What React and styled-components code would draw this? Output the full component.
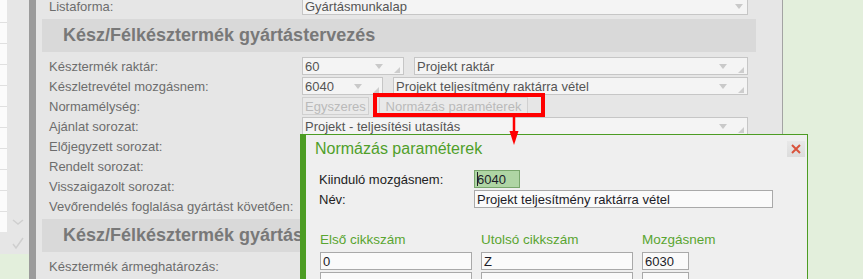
import styled, { createGlobalStyle } from "styled-components";

const GlobalStyle = createGlobalStyle`
  html, body { margin: 0; padding: 0; }
  body {
    width: 863px;
    height: 279px;
    overflow: hidden;
    background: #e6e6e6;
    font-family: "Liberation Sans", Arial, sans-serif;
  }
`;

const Screen = styled.div`
  position: relative;
  display: grid;
  grid-template-columns: 29px 7px 746px 81px;
  height: 279px;
  overflow: hidden;
`;

/* left strip: cut-off list + row tools */
const LeftStrip = styled.div`
  display: grid;
  grid-template-columns: 7px 22px;
  grid-template-rows: 254px 1fr;
  background: #e6e6e6;
`;

const ListColumn = styled.div`
  align-self: start;
  height: 232px;
  padding-top: 2px;
  box-sizing: border-box;
  overflow: hidden;
  background: #fbfbfb;
`;

const ListRow = styled.div`
  height: 20px;
  border-bottom: 1px solid #e0e0e0;
`;

const ToolColumn = styled.div`
  display: flex;
  flex-direction: column;
  align-items: center;
  justify-content: flex-end;
  gap: 7px;
  padding-bottom: 4px;
`;

const GreenFill = styled.div`
  grid-column: 1 / -1;
  background: #e3efdc;
`;

const Divider = styled.div`
  background: #9b9b9b;
`;

const SidePane = styled.div`
  background: #e3efdc;
  border-left: 1px solid #a3a3a3;
`;

/* main form */
const Panel = styled.div`
  background: #e6e6e6;
  padding: 0 26px 0 6px;
`;

const PanelContent = styled.div`
  margin-top: -4px;
  display: flex;
  flex-direction: column;
`;

const SectionHeader = styled.div`
  height: 33px;
  margin: 3px 0 4px;
  padding-left: 21px;
  display: flex;
  align-items: center;
  background: #d9d9d9;
  color: #787878;
  font-size: 18px;
  font-weight: bold;
  white-space: nowrap;
  overflow: hidden;
`;

const FormRow = styled.div`
  display: grid;
  grid-template-columns: 253px 1fr;
  align-items: center;
  height: 20px;
  padding: 0 8px 0 7px;
`;

const Label = styled.span`
  font-size: 13px;
  color: #6d6d6d;
  white-space: nowrap;
`;

const Fields = styled.div`
  display: flex;
  gap: 10px;
  min-width: 0;
`;

const SelectBox = styled.div`
  display: flex;
  align-items: center;
  height: 18px;
  box-sizing: border-box;
  width: ${(p) => (p.$width ? `${p.$width}px` : "auto")};
  flex: ${(p) => (p.$width ? "0 0 auto" : "1 1 0")};
  padding: 0 ${(p) => (p.$resize ? 3 : 4)}px 0 2px;
  border: 1px solid #c6c6c6;
  background: #f4f4f4;
  font-size: 13px;
  color: #555;
`;

const SelectValue = styled.span`
  flex: 1;
  white-space: nowrap;
  overflow: hidden;
`;

const Corner = styled.svg`
  align-self: flex-end;
  margin: 0 0 1px 11px;
`;

const StaticBox = styled.div`
  height: 18px;
  box-sizing: border-box;
  width: ${(p) => p.$width}px;
  padding: 0 2px;
  display: flex;
  align-items: center;
  justify-content: ${(p) => (p.$center ? "center" : "flex-start")};
  border: 1px solid #d0d0d0;
  background: #e9e9e9;
  color: #bababa;
  font-size: 13px;
  white-space: nowrap;
`;

function Select({ value, width, resize = true }) {
  return (
    <SelectBox $width={width} $resize={resize}>
      <SelectValue>{value}</SelectValue>
      <svg width="8" height="5" viewBox="0 0 8 5">
        <polygon points="0,0 8,0 4,5" fill="#c9c9c9" />
      </svg>
      {resize && (
        <Corner width="6" height="6" viewBox="0 0 6 6">
          <polygon points="6,0 6,6 0,6" fill="#cdcdcd" />
        </Corner>
      )}
    </SelectBox>
  );
}

/* dialog */
const Dialog = styled.div`
  position: absolute;
  left: 300px;
  top: 134px;
  width: 508px;
  height: 170px;
  box-sizing: border-box;
  border: 1px solid #4c9c23;
  border-left-width: 6px;
  border-bottom: none;
  background: #efefef;
`;

const TitleBar = styled.div`
  display: flex;
  align-items: center;
  justify-content: space-between;
  padding: 5px 2px 0 9px;
`;

const Title = styled.span`
  font-size: 16px;
  color: #4f9f2a;
`;

const CloseButton = styled.div`
  width: 18px;
  height: 16px;
  display: flex;
  align-items: center;
  justify-content: center;
  background: linear-gradient(#e8e8e8, #dcdcdc);
`;

const DialogBody = styled.div`
  padding: 11px 0 0 13px;
`;

const ParamRow = styled.div`
  display: grid;
  grid-template-columns: 155px auto;
  justify-content: start;
  align-items: center;
  height: 20px;
`;

const ParamLabel = styled.span`
  font-size: 13px;
  color: #222;
`;

const ParamInput = styled.div`
  width: ${(p) => p.$width}px;
  height: 18px;
  box-sizing: border-box;
  padding: 0 2px;
  display: flex;
  align-items: center;
  border: 1px solid ${(p) => (p.$active ? "#78a66c" : "#a9a9a9")};
  background: ${(p) => (p.$active ? "#afd5a4" : "#fafafa")};
  font-size: 13px;
  color: #1c1c28;
  white-space: nowrap;
  overflow: hidden;
`;

const Caret = styled.span`
  width: 1px;
  height: 14px;
  margin-right: -1px;
  background: #1c1c28;
`;

const RangeGrid = styled.div`
  display: grid;
  grid-template-columns: 152px 152px 47px;
  column-gap: 9px;
  row-gap: 2px;
  margin-top: 21px;
  padding-left: 1px;
`;

const ColumnTitle = styled.span`
  height: 20px;
  line-height: 20px;
  font-size: 13.5px;
  color: #5aa531;
`;

const RangeInput = styled(ParamInput)`
  width: auto;
`;

/* red annotation */
const Highlight = styled.div`
  position: absolute;
  left: 373px;
  top: 93px;
  width: 172px;
  height: 24px;
  box-sizing: border-box;
  border: 4px solid #ff0000;
`;

const Pointer = styled.svg`
  position: absolute;
  left: 508px;
  top: 116px;
`;

export default function App() {
  return (
    <>
      <GlobalStyle />
      <Screen>
        <LeftStrip>
          <ListColumn>
            {Array.from({ length: 11 }, (_, i) => (
              <ListRow key={i} />
            ))}
          </ListColumn>
          <ToolColumn>
            <svg width="12" height="14" viewBox="0 0 12 14">
              <polyline points="1,5 6,9 11,5" fill="none" stroke="#cfcfcf" strokeWidth="1.5" />
            </svg>
            <svg width="12" height="14" viewBox="0 0 12 14">
              <polyline points="1,8 4,12 11,2" fill="none" stroke="#cfcfcf" strokeWidth="1.5" />
            </svg>
          </ToolColumn>
          <GreenFill />
        </LeftStrip>

        <Divider />

        <Panel>
          <PanelContent>
            <FormRow>
              <Label>Listaforma:</Label>
              <Fields>
                <Select value="Gyártásmunkalap" resize={false} />
              </Fields>
            </FormRow>

            <SectionHeader>Kész/Félkésztermék gyártástervezés</SectionHeader>

            <FormRow>
              <Label>Késztermék raktár:</Label>
              <Fields>
                <Select value="60" width={102} />
                <Select value="Projekt raktár" />
              </Fields>
            </FormRow>
            <FormRow>
              <Label>Készletrevétel mozgásnem:</Label>
              <Fields>
                <Select value="6040" width={81} />
                <Select value="Projekt teljesítmény raktárra vétel" />
              </Fields>
            </FormRow>
            <FormRow>
              <Label>Normamélység:</Label>
              <Fields>
                <StaticBox $width={67}>Egyszeres</StaticBox>
                <StaticBox $width={149} $center>
                  Normázás paraméterek
                </StaticBox>
              </Fields>
            </FormRow>
            <FormRow>
              <Label>Ajánlat sorozat:</Label>
              <Fields>
                <Select value="Projekt - teljesítési utasítás" />
              </Fields>
            </FormRow>
            <FormRow>
              <Label>Előjegyzett sorozat:</Label>
            </FormRow>
            <FormRow>
              <Label>Rendelt sorozat:</Label>
            </FormRow>
            <FormRow>
              <Label>Visszaigazolt sorozat:</Label>
            </FormRow>
            <FormRow>
              <Label>Vevőrendelés foglalása gyártást követően:</Label>
            </FormRow>

            <SectionHeader>Kész/Félkésztermék gyártás</SectionHeader>

            <FormRow>
              <Label>Késztermék ármeghatározás:</Label>
            </FormRow>
          </PanelContent>
        </Panel>

        <SidePane />

        <Dialog>
          <TitleBar>
            <Title>Normázás paraméterek</Title>
            <CloseButton>
              <svg width="10" height="10" viewBox="0 0 10 10">
                <path d="M1 1 L9 9 M9 1 L1 9" stroke="#d9533c" strokeWidth="2" />
              </svg>
            </CloseButton>
          </TitleBar>
          <DialogBody>
            <ParamRow>
              <ParamLabel>Kiinduló mozgásnem:</ParamLabel>
              <ParamInput $width={46} $active>
                <Caret />
                6040
              </ParamInput>
            </ParamRow>
            <ParamRow>
              <ParamLabel>Név:</ParamLabel>
              <ParamInput $width={299}>Projekt teljesítmény raktárra vétel</ParamInput>
            </ParamRow>
            <RangeGrid>
              <ColumnTitle>Első cikkszám</ColumnTitle>
              <ColumnTitle>Utolsó cikkszám</ColumnTitle>
              <ColumnTitle>Mozgásnem</ColumnTitle>
              <RangeInput>0</RangeInput>
              <RangeInput>Z</RangeInput>
              <RangeInput>6030</RangeInput>
              <RangeInput />
              <RangeInput />
              <RangeInput />
            </RangeGrid>
          </DialogBody>
        </Dialog>

        <Highlight />
        <Pointer width="12" height="30" viewBox="0 0 12 30">
          <line x1="6" y1="0" x2="6" y2="16" stroke="#ff0000" strokeWidth="2.5" />
          <polygon points="1.5,15 10.5,15 6,29" fill="#ff0000" />
        </Pointer>
      </Screen>
    </>
  );
}
